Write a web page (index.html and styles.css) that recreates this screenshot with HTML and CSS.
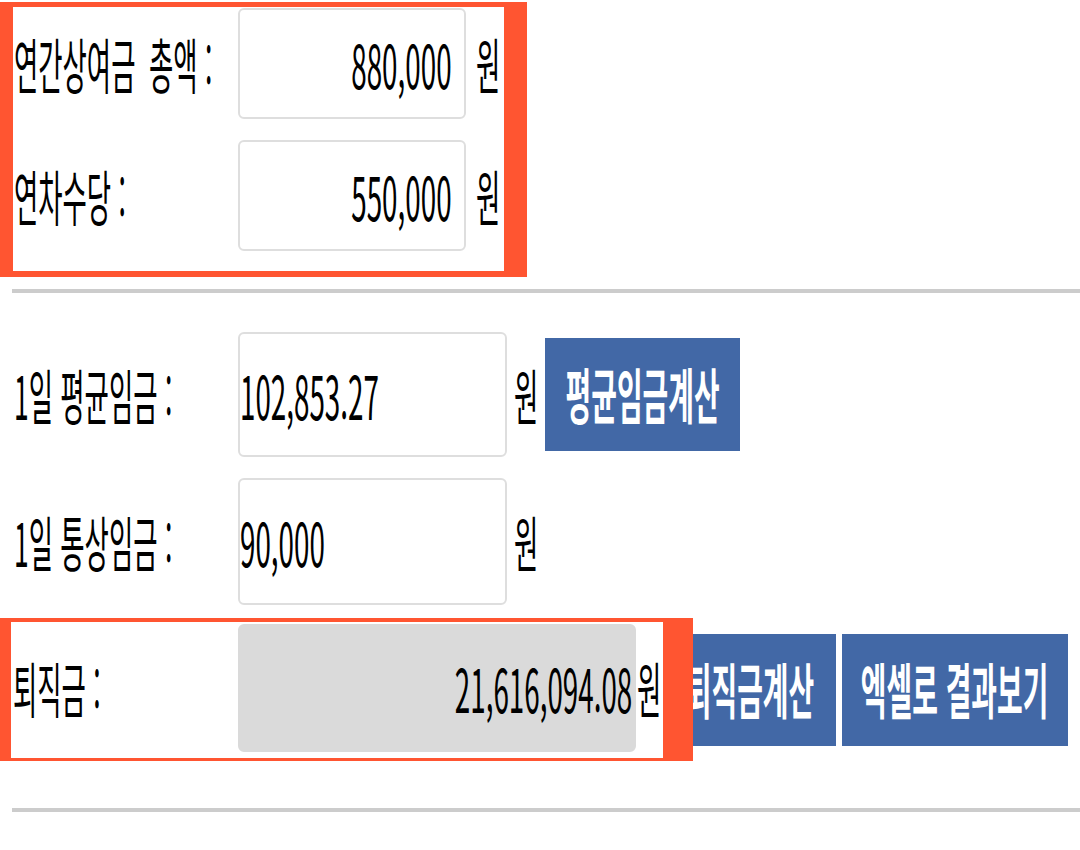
FILE: index.html
```html
<!DOCTYPE html>
<html lang="ko">
<head>
<meta charset="utf-8">
<title>퇴직금 계산</title>
<link rel="stylesheet" href="styles.css">
</head>
<body>
<div class="page">
  <div class="hl hl-top">
    <div class="row row-a">
      <div class="label"><span class="t">연간상여금<span class="gap"> </span>총액 :</span></div>
      <div class="field field-a align-r"><span class="t n tr">880,000</span></div>
      <div class="unit unit-a"><span class="t">원</span></div>
    </div>
    <div class="row row-a row-gap">
      <div class="label"><span class="t">연차수당 :</span></div>
      <div class="field field-a align-r"><span class="t n tr">550,000</span></div>
      <div class="unit unit-a"><span class="t">원</span></div>
    </div>
  </div>

  <div class="rule rule-1"></div>

  <div class="row row-b row-b1">
    <div class="label label-b"><span class="t">1일 평균임금 :</span></div>
    <div class="field field-b"><span class="t n">102,853.27</span></div>
    <div class="unit unit-b"><span class="t">원</span></div>
    <div class="btn btn-avg"><span class="t b tc">평균임금계산</span></div>
  </div>
  <div class="row row-b row-b2">
    <div class="label label-b"><span class="t">1일 통상임금 :</span></div>
    <div class="field field-b"><span class="t n">90,000</span></div>
    <div class="unit unit-b"><span class="t">원</span></div>
  </div>

  <div class="result-row">
    <div class="hl hl-bottom">
      <div class="row row-c">
        <div class="label label-c"><span class="t">퇴직금 :</span></div>
        <div class="field field-c align-r"><span class="t n tr">21,616,094.08</span></div>
        <div class="unit unit-c"><span class="t">원</span></div>
      </div>
    </div>
    <div class="btn btn-calc"><span class="t b tc">퇴직금계산</span></div>
    <div class="btn btn-excel"><span class="t b tc">엑셀로 결과보기</span></div>
  </div>

  <div class="rule rule-2"></div>
</div>
</body>
</html>
```

FILE: styles.css
```css
:root {
  --sx: 0.44;
  --sxn: 0.463;
  --sxb: 0.465;
  --orange: #ff5531;
  --blue: #4268a6;
}

html, body {
  margin: 0;
  padding: 0;
  background: #ffffff;
  overflow: hidden;
}

body {
  font-family: "Noto Sans CJK KR", "Noto Sans", sans-serif;
  font-size: 60px;
  font-weight: 400;
  line-height: 1;
  color: #000;
}

.page {
  width: 1080px;
  padding-top: 2px;
}

.t {
  display: inline-block;
  white-space: pre;
  transform: translateY(-1px) scaleX(var(--sx));
  transform-origin: left center;
}

.t.n {
  transform: translateY(-1px) scaleX(var(--sxn));
  transform-origin: left center;
}

.t.b {
  transform: translateY(-2px) scaleX(var(--sxb));
}

.t.tr {
  transform-origin: right center;
}

.t.tc {
  transform-origin: center center;
}

.gap {
  word-spacing: 14px;
}

/* highlight boxes */
.hl {
  border-style: solid;
  border-color: var(--orange);
  box-sizing: border-box;
}

.hl-top {
  width: 527px;
  height: 275px;
  border-width: 5px 23px 6px 13px;
  padding-top: 1px;
}

.row {
  display: flex;
  align-items: center;
}

.row-a {
  height: 111px;
}

.row-gap {
  margin-top: 21px;
}

.label {
  width: 225px;
  padding-left: 1px;
  box-sizing: border-box;
  flex: none;
}

.field {
  box-sizing: border-box;
  height: 100%;
  border: 2px solid #dedede;
  border-radius: 6px;
  background: #fff;
  display: flex;
  align-items: center;
  flex: none;
  overflow: hidden;
}

.align-r {
  justify-content: flex-end;
}

.field-a {
  width: 228px;
  padding-right: 12px;
}

.unit {
  flex: none;
  width: 26px;
  overflow: visible;
}

.unit-a {
  margin-left: 10px;
}

.rule {
  height: 4px;
  margin-left: 12px;
  background: #cccccc;
}

.rule-1 {
  margin-top: 12px;
}

.row-b {
  padding-left: 14px;
}

.row-b1 {
  margin-top: 39px;
  height: 125px;
}

.row-b2 {
  margin-top: 21px;
  height: 127px;
}

.label-b {
  width: 224px;
  padding-left: 0;
}

.field-b {
  width: 269px;
  padding-left: 0;
}

.unit-b {
  margin-left: 7px;
}

.btn {
  flex: none;
  background: var(--blue);
  color: #fff;
  font-weight: 700;
  display: flex;
  align-items: center;
  justify-content: center;
  box-sizing: border-box;
}

.btn-avg {
  margin-left: 5px;
  width: 195px;
  height: 113px;
}

/* result row */
.result-row {
  margin-top: 13px;
  display: flex;
  align-items: center;
}

.hl-bottom {
  position: relative;
  z-index: 2;
  flex: none;
  width: 693px;
  height: 143px;
  border-width: 4px 30px 3px 11px;
  padding-top: 2px;
}

.row-c {
  height: 128px;
}

.label-c {
  width: 227px;
  padding-left: 2px;
}

.field-c {
  width: 398px;
  background: #dadada;
  border-color: #dadada;
  padding-right: 2px;
}

.unit-c {
  margin-left: 1px;
}

.btn-calc {
  position: relative;
  z-index: 1;
  margin-left: -29px;
  width: 172px;
  height: 112px;
}

.btn-excel {
  margin-left: 6px;
  width: 226px;
  height: 112px;
}

.rule-2 {
  margin-top: 47px;
}
```
